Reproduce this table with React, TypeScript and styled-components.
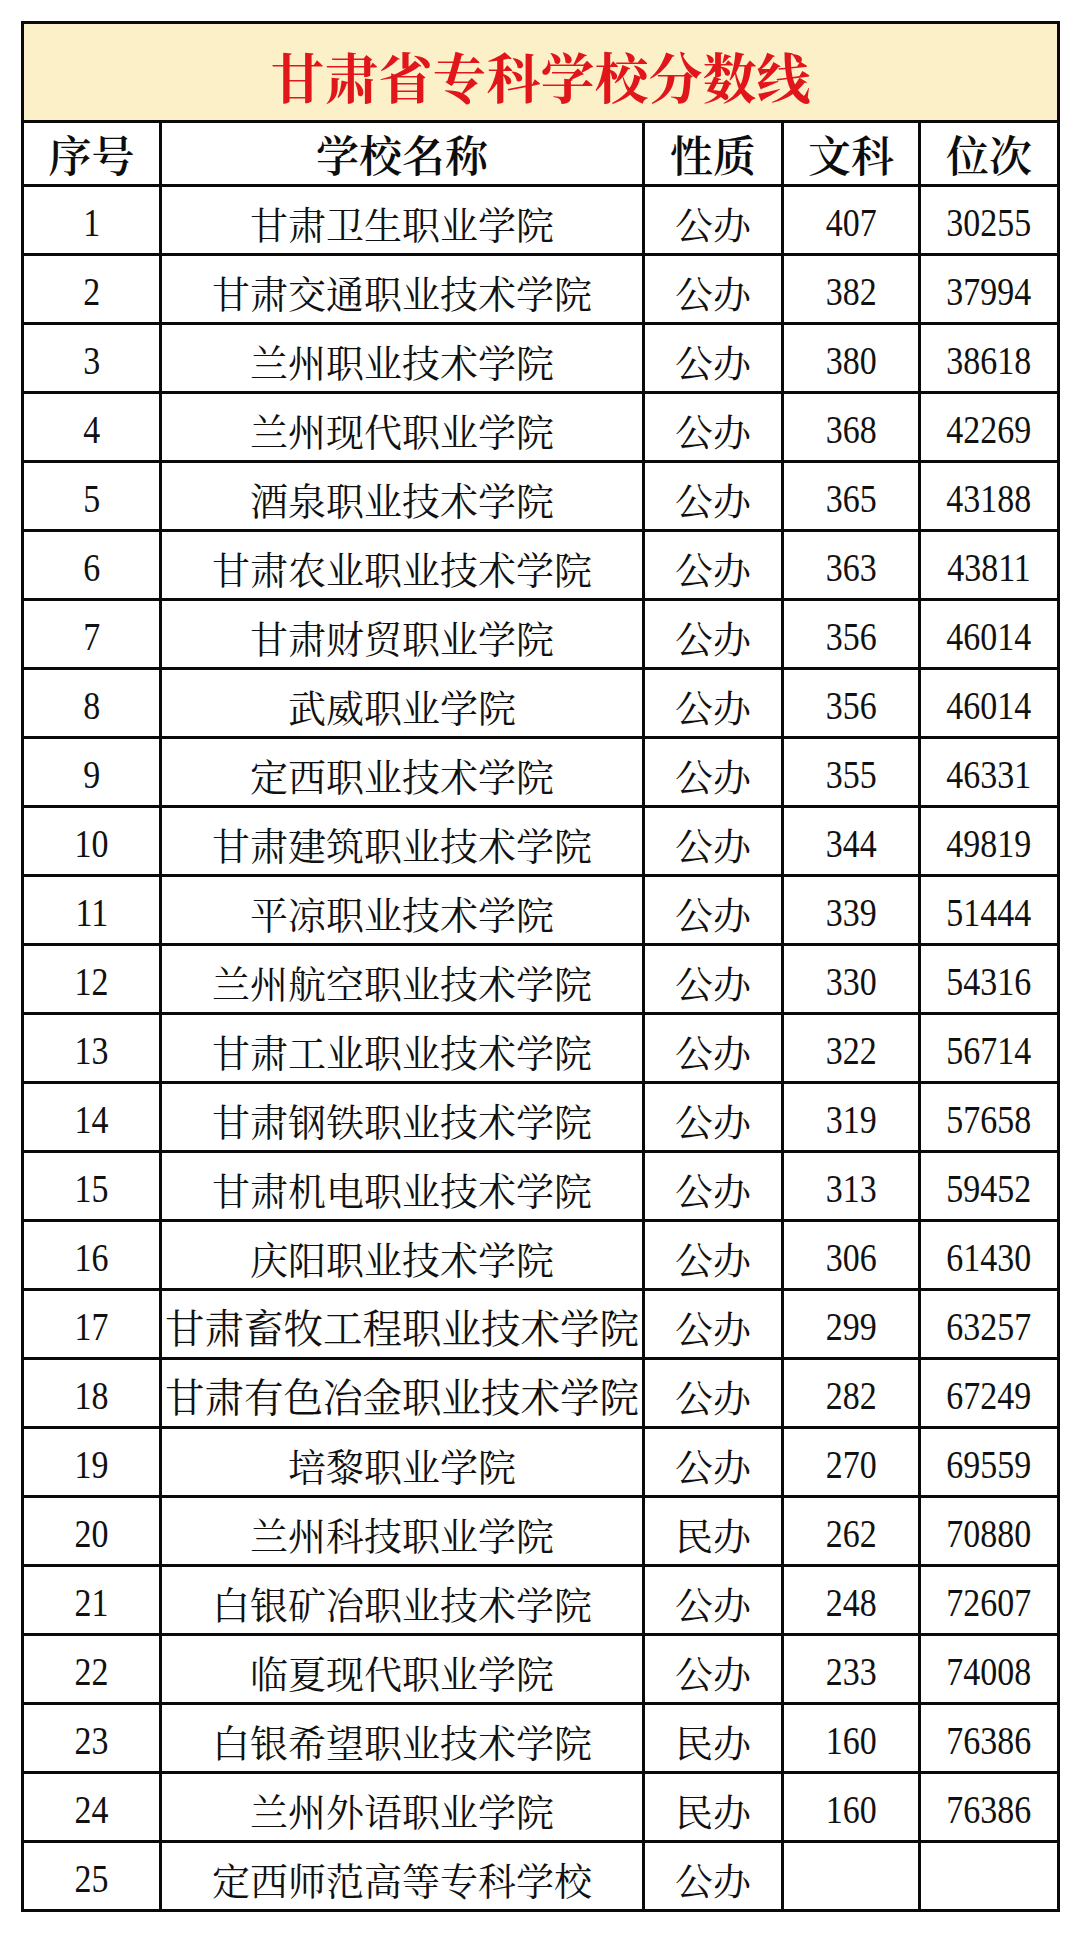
import React from "react";
import styled, { createGlobalStyle } from "styled-components";

const GlobalStyle = createGlobalStyle`
  html, body {
    margin: 0;
    padding: 0;
    background: #ffffff;
  }
  body {
    width: 1080px;
    min-height: 1934px;
  }
`;

const CJK = `"Noto Serif CJK SC", "Noto Sans CJK SC", serif`;

const Page = styled.div`
  padding: 21px 0 0 21px;
  box-sizing: border-box;
  width: 1080px;
  min-height: 1934px;
  background: #ffffff;
`;

const Grid = styled.div`
  display: grid;
  grid-template-columns: 135px 480px 136px 134px 136px;
  grid-template-rows: 96px 61px;
  grid-auto-rows: 66px;
  gap: 3px;
  padding: 3px;
  background: #0a0a0a;
  width: max-content;
`;

const TitleCell = styled.div`
  grid-column: 1 / -1;
  background: #fcf0c9;
  display: flex;
  align-items: center;
  justify-content: center;
  padding-top: 6px;
  box-sizing: border-box;
  color: #e1161b;
  font-family: ${CJK};
  font-size: 54px;
  font-weight: 700;
  letter-spacing: 0;
`;

const HeadCell = styled.div`
  background: #ffffff;
  display: flex;
  align-items: center;
  justify-content: center;
  color: #0d0d0d;
  font-family: ${CJK};
  font-size: 43px;
  font-weight: 600;
`;

const Cell = styled.div<{ $size?: number }>`
  background: #ffffff;
  display: flex;
  align-items: center;
  justify-content: center;
  padding-top: 4px;
  box-sizing: border-box;
  color: #111111;
  font-family: ${CJK};
  font-size: ${(p) => p.$size ?? 38}px;
  font-weight: 400;
  white-space: nowrap;
  overflow: hidden;
`;

const Num = styled.span`
  display: inline-block;
  font-family: "Liberation Serif", "Times New Roman", serif;
  font-size: 39px;
  color: #111111;
  transform: scaleX(0.87);
  line-height: 1;
`;

type Row = [string, string, string, string];

const rows: Row[] = [
  ["甘肃卫生职业学院", "公办", "407", "30255"],
  ["甘肃交通职业技术学院", "公办", "382", "37994"],
  ["兰州职业技术学院", "公办", "380", "38618"],
  ["兰州现代职业学院", "公办", "368", "42269"],
  ["酒泉职业技术学院", "公办", "365", "43188"],
  ["甘肃农业职业技术学院", "公办", "363", "43811"],
  ["甘肃财贸职业学院", "公办", "356", "46014"],
  ["武威职业学院", "公办", "356", "46014"],
  ["定西职业技术学院", "公办", "355", "46331"],
  ["甘肃建筑职业技术学院", "公办", "344", "49819"],
  ["平凉职业技术学院", "公办", "339", "51444"],
  ["兰州航空职业技术学院", "公办", "330", "54316"],
  ["甘肃工业职业技术学院", "公办", "322", "56714"],
  ["甘肃钢铁职业技术学院", "公办", "319", "57658"],
  ["甘肃机电职业技术学院", "公办", "313", "59452"],
  ["庆阳职业技术学院", "公办", "306", "61430"],
  ["甘肃畜牧工程职业技术学院", "公办", "299", "63257"],
  ["甘肃有色冶金职业技术学院", "公办", "282", "67249"],
  ["培黎职业学院", "公办", "270", "69559"],
  ["兰州科技职业学院", "民办", "262", "70880"],
  ["白银矿冶职业技术学院", "公办", "248", "72607"],
  ["临夏现代职业学院", "公办", "233", "74008"],
  ["白银希望职业技术学院", "民办", "160", "76386"],
  ["兰州外语职业学院", "民办", "160", "76386"],
  ["定西师范高等专科学校", "公办", "", ""],
];

const headers = ["序号", "学校名称", "性质", "文科", "位次"];

export default function App() {
  return (
    <>
      <GlobalStyle />
      <Page>
        <Grid>
          <TitleCell>甘肃省专科学校分数线</TitleCell>
          {headers.map((h) => (
            <HeadCell key={h}>{h}</HeadCell>
          ))}
          {rows.map(([name, kind, score, rank], i) => (
            <React.Fragment key={i}>
              <Cell>
                <Num>{i + 1}</Num>
              </Cell>
              <Cell $size={name.length > 10 ? 39.5 : 38}>{name}</Cell>
              <Cell>{kind}</Cell>
              <Cell>{score && <Num>{score}</Num>}</Cell>
              <Cell>{rank && <Num>{rank}</Num>}</Cell>
            </React.Fragment>
          ))}
        </Grid>
      </Page>
    </>
  );
}
